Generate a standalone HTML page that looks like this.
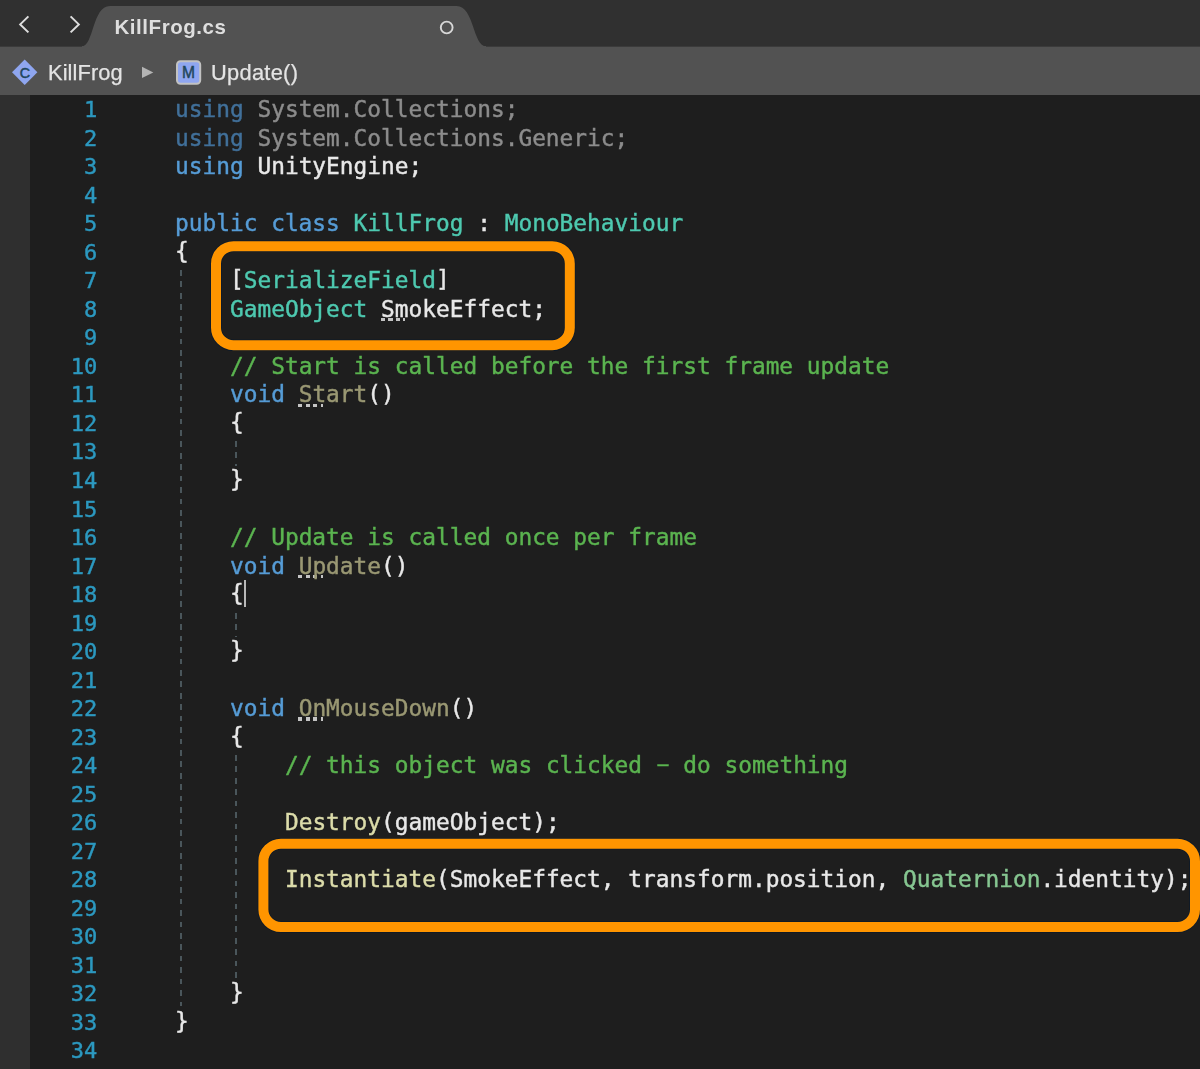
<!DOCTYPE html>
<html lang="en">
<head>
<meta charset="utf-8">
<title>KillFrog.cs</title>
<style>
html,body{margin:0;padding:0;}
body{width:1200px;height:1069px;overflow:hidden;background:#1e1e1e;position:relative;font-family:"Liberation Sans",sans-serif;}
#tabs{position:absolute;left:0;top:0;width:1200px;height:46px;background:#303030;}
#crumbs{position:absolute;left:0;top:46px;width:1200px;height:49px;background:#525252;}
#strip{position:absolute;left:0;top:95px;width:30px;height:974px;background:#2f2f2f;}
#tabshape{position:absolute;left:0;top:0;}
.tabtitle{position:absolute;left:114.5px;top:15px;font-size:20.5px;font-weight:bold;color:#dedede;line-height:24px;white-space:nowrap;letter-spacing:0.55px;}
.crumb{position:absolute;top:59.6px;font-size:21.8px;-webkit-text-stroke:0.25px currentColor;color:#e4e4e4;line-height:26px;white-space:nowrap;}
.ln,.cl{position:absolute;font-family:"DejaVu Sans Mono","Liberation Mono",monospace;font-size:22.82px;line-height:28px;height:28px;white-space:pre;-webkit-text-stroke:0.42px currentColor;letter-spacing:0.0012px;}
.ln{left:30px;width:67.2px;text-align:right;color:#2c99c0;font-size:22px;letter-spacing:-0.05px;}
.k{color:#569cd6}
.kd{color:#41709a}
.gd{color:#8c8c8c}
.w{color:#e8e8e8}
.t{color:#4ec9b0}
.c{color:#5bb450}
.m{color:#dcdcaa}
.md{color:#9a9873}
.s{color:#86c691}
.box{position:absolute;border:10px solid #ff9500;border-radius:22px;box-sizing:border-box;}
.guide{position:absolute;width:2px;background:repeating-linear-gradient(to bottom,#4a565b 0,#4a565b 5.7px,transparent 5.7px,transparent 11.43px);}
.dots{position:absolute;height:3.4px;width:24.8px;background:repeating-linear-gradient(to right,#c4c4c4 0,#c4c4c4 4.2px,transparent 4.2px,transparent 7.5px);}
#code,#hdr{position:absolute;left:0;top:0;width:1200px;height:1069px;will-change:transform;}
.nd{display:inline-block;transform:translateY(-1.2px) scaleX(0.8);}
.br{position:relative;top:-1.5px}
.bk{position:relative;top:-1px}
#caret{position:absolute;left:244.4px;top:580px;width:1.3px;height:27px;background:#b8b8b8;}
</style>
</head>
<body>
<div id="tabs"></div>
<div id="crumbs"></div>
<div style="position:absolute;left:0;top:46px;width:82px;height:1px;background:#3b3b3b"></div><div style="position:absolute;left:486px;top:46px;width:714px;height:1px;background:#3b3b3b"></div>
<svg id="tabshape" width="1200" height="96" viewBox="0 0 1200 96">
  <path d="M81.5 46.5 C94 46.5 92 6 110 6 L456.5 6 C474.5 6 472.5 46.5 486.5 46.5 Z" fill="#525252"/>
  <polyline points="28.4,16.4 20.2,24.4 28.4,32.4" fill="none" stroke="#dedede" stroke-width="2" stroke-linecap="butt" stroke-linejoin="miter"/>
  <polyline points="70.6,16.4 78.8,24.4 70.6,32.4" fill="none" stroke="#dedede" stroke-width="2" stroke-linecap="butt" stroke-linejoin="miter"/>
  <circle cx="446.7" cy="27.5" r="5.9" fill="none" stroke="#d8d8d8" stroke-width="1.9"/>
  <!-- class icon -->
  <path d="M24.7 59.5 L37.4 72.3 L24.7 85 L12 72.3 Z" fill="#8fa6f0"/>
  <text x="24.8" y="77.6" text-anchor="middle" font-family="Liberation Sans, sans-serif" font-size="14.3" fill="#1f465c" stroke="#1f465c" stroke-width="0.5">C</text>
  <!-- arrow -->
  <path d="M142 66.7 L153.3 72.4 L142 78 Z" fill="#b4b4b4"/>
  <!-- method icon -->
  <rect x="177" y="61.2" width="23.2" height="22.6" rx="3.5" ry="3.5" fill="#8fa6f0" stroke="#c2c2c2" stroke-width="2"/>
  <text x="188.6" y="78.2" text-anchor="middle" font-family="Liberation Sans, sans-serif" font-size="15.6" fill="#1f465c" stroke="#1f465c" stroke-width="0.45">M</text>
</svg>
<div id="hdr">
<div class="tabtitle">KillFrog.cs</div>
<div class="crumb" style="left:48px;letter-spacing:0.1px">KillFrog</div>
<div class="crumb" style="left:211px;letter-spacing:0.3px">Update()</div>
</div>
<div id="strip"></div>

<div class="guide" style="left:180px;top:270.2px;height:735.6px"></div>
<div class="guide" style="left:235px;top:441px;height:25px"></div>
<div class="guide" style="left:235px;top:612.6px;height:24.6px"></div>
<div class="guide" style="left:235px;top:754.7px;height:223.6px"></div>

<div class="dots" style="left:380.5px;top:318px"></div>
<div class="dots" style="left:298.1px;top:403.5px"></div>
<div class="dots" style="left:298.1px;top:574.6px"></div>
<div class="dots" style="left:298.1px;top:717.3px"></div>
<div id="code">
<div class="ln" style="top:96px">1</div>
<div class="cl" style="top:95px;left:175.00px"><span class="kd">using</span><span class="gd"> System.Collections;</span></div>
<div class="ln" style="top:125px">2</div>
<div class="cl" style="top:124px;left:175.00px"><span class="kd">using</span><span class="gd"> System.Collections.Generic;</span></div>
<div class="ln" style="top:153px">3</div>
<div class="cl" style="top:152px;left:175.00px"><span class="k">using</span><span class="w"> UnityEngine;</span></div>
<div class="ln" style="top:182px">4</div>
<div class="ln" style="top:210px">5</div>
<div class="cl" style="top:209px;left:175.00px"><span class="k">public class</span><span class="t"> KillFrog</span><span class="w"> : </span><span class="t">MonoBehaviour</span></div>
<div class="ln" style="top:239px">6</div>
<div class="cl" style="top:238px;left:175.00px"><span class="w br">{</span></div>
<div class="ln" style="top:267px">7</div>
<div class="cl" style="top:266px;left:229.96px"><span class="w bk">[</span><span class="t">SerializeField</span><span class="w bk">]</span></div>
<div class="ln" style="top:296px">8</div>
<div class="cl" style="top:295px;left:229.96px"><span class="t">GameObject</span><span class="w"> SmokeEffect;</span></div>
<div class="ln" style="top:324px">9</div>
<div class="ln" style="top:353px">10</div>
<div class="cl" style="top:352px;left:229.96px"><span class="c">// Start is called before the first frame update</span></div>
<div class="ln" style="top:381px">11</div>
<div class="cl" style="top:380px;left:229.96px"><span class="k">void</span><span class="md"> Start</span><span class="w">()</span></div>
<div class="ln" style="top:410px">12</div>
<div class="cl" style="top:409px;left:229.96px"><span class="w br">{</span></div>
<div class="ln" style="top:438px">13</div>
<div class="ln" style="top:467px">14</div>
<div class="cl" style="top:466px;left:229.96px"><span class="w br">}</span></div>
<div class="ln" style="top:496px">15</div>
<div class="ln" style="top:524px">16</div>
<div class="cl" style="top:523px;left:229.96px"><span class="c">// Update is called once per frame</span></div>
<div class="ln" style="top:553px">17</div>
<div class="cl" style="top:552px;left:229.96px"><span class="k">void</span><span class="md"> Update</span><span class="w">()</span></div>
<div class="ln" style="top:581px">18</div>
<div class="cl" style="top:580px;left:229.96px"><span class="w br">{</span></div>
<div class="ln" style="top:610px">19</div>
<div class="ln" style="top:638px">20</div>
<div class="cl" style="top:637px;left:229.96px"><span class="w br">}</span></div>
<div class="ln" style="top:667px">21</div>
<div class="ln" style="top:695px">22</div>
<div class="cl" style="top:694px;left:229.96px"><span class="k">void</span><span class="md"> OnMouseDown</span><span class="w">()</span></div>
<div class="ln" style="top:724px">23</div>
<div class="cl" style="top:723px;left:229.96px"><span class="w br">{</span></div>
<div class="ln" style="top:752px">24</div>
<div class="cl" style="top:751px;left:284.92px"><span class="c">// this object was clicked <span class="nd">–</span> do something</span></div>
<div class="ln" style="top:781px">25</div>
<div class="ln" style="top:809px">26</div>
<div class="cl" style="top:808px;left:284.92px"><span class="m">Destroy</span><span class="w">(gameObject);</span></div>
<div class="ln" style="top:838px">27</div>
<div class="ln" style="top:866px">28</div>
<div class="cl" style="top:865px;left:284.92px"><span class="m">Instantiate</span><span class="w">(SmokeEffect, transform.position, </span><span class="s">Quaternion</span><span class="w">.identity);</span></div>
<div class="ln" style="top:895px">29</div>
<div class="ln" style="top:923px">30</div>
<div class="ln" style="top:952px">31</div>
<div class="ln" style="top:980px">32</div>
<div class="cl" style="top:979px;left:229.96px"><span class="w br">}</span></div>
<div class="ln" style="top:1009px">33</div>
<div class="cl" style="top:1008px;left:175.00px"><span class="w br">}</span></div>
<div class="ln" style="top:1037px">34</div>
</div>

<div id="caret"></div>

<svg id="boxes" width="1200" height="1069" viewBox="0 0 1200 1069" style="position:absolute;left:0;top:0">
  <rect x="216" y="246.2" width="353.8" height="99" rx="17.5" ry="17.5" fill="none" stroke="#0b1a2c" stroke-width="11.6" opacity="0.85"/>
  <rect x="216" y="246.2" width="353.8" height="99" rx="17.5" ry="17.5" fill="none" stroke="#ff9500" stroke-width="10"/>
  <rect x="263.4" y="843.7" width="931.6" height="83.3" rx="17.5" ry="17.5" fill="none" stroke="#0b1a2c" stroke-width="11.6" opacity="0.85"/>
  <rect x="263.4" y="843.7" width="931.6" height="83.3" rx="17.5" ry="17.5" fill="none" stroke="#ff9500" stroke-width="10"/>
</svg>
</body>
</html>
